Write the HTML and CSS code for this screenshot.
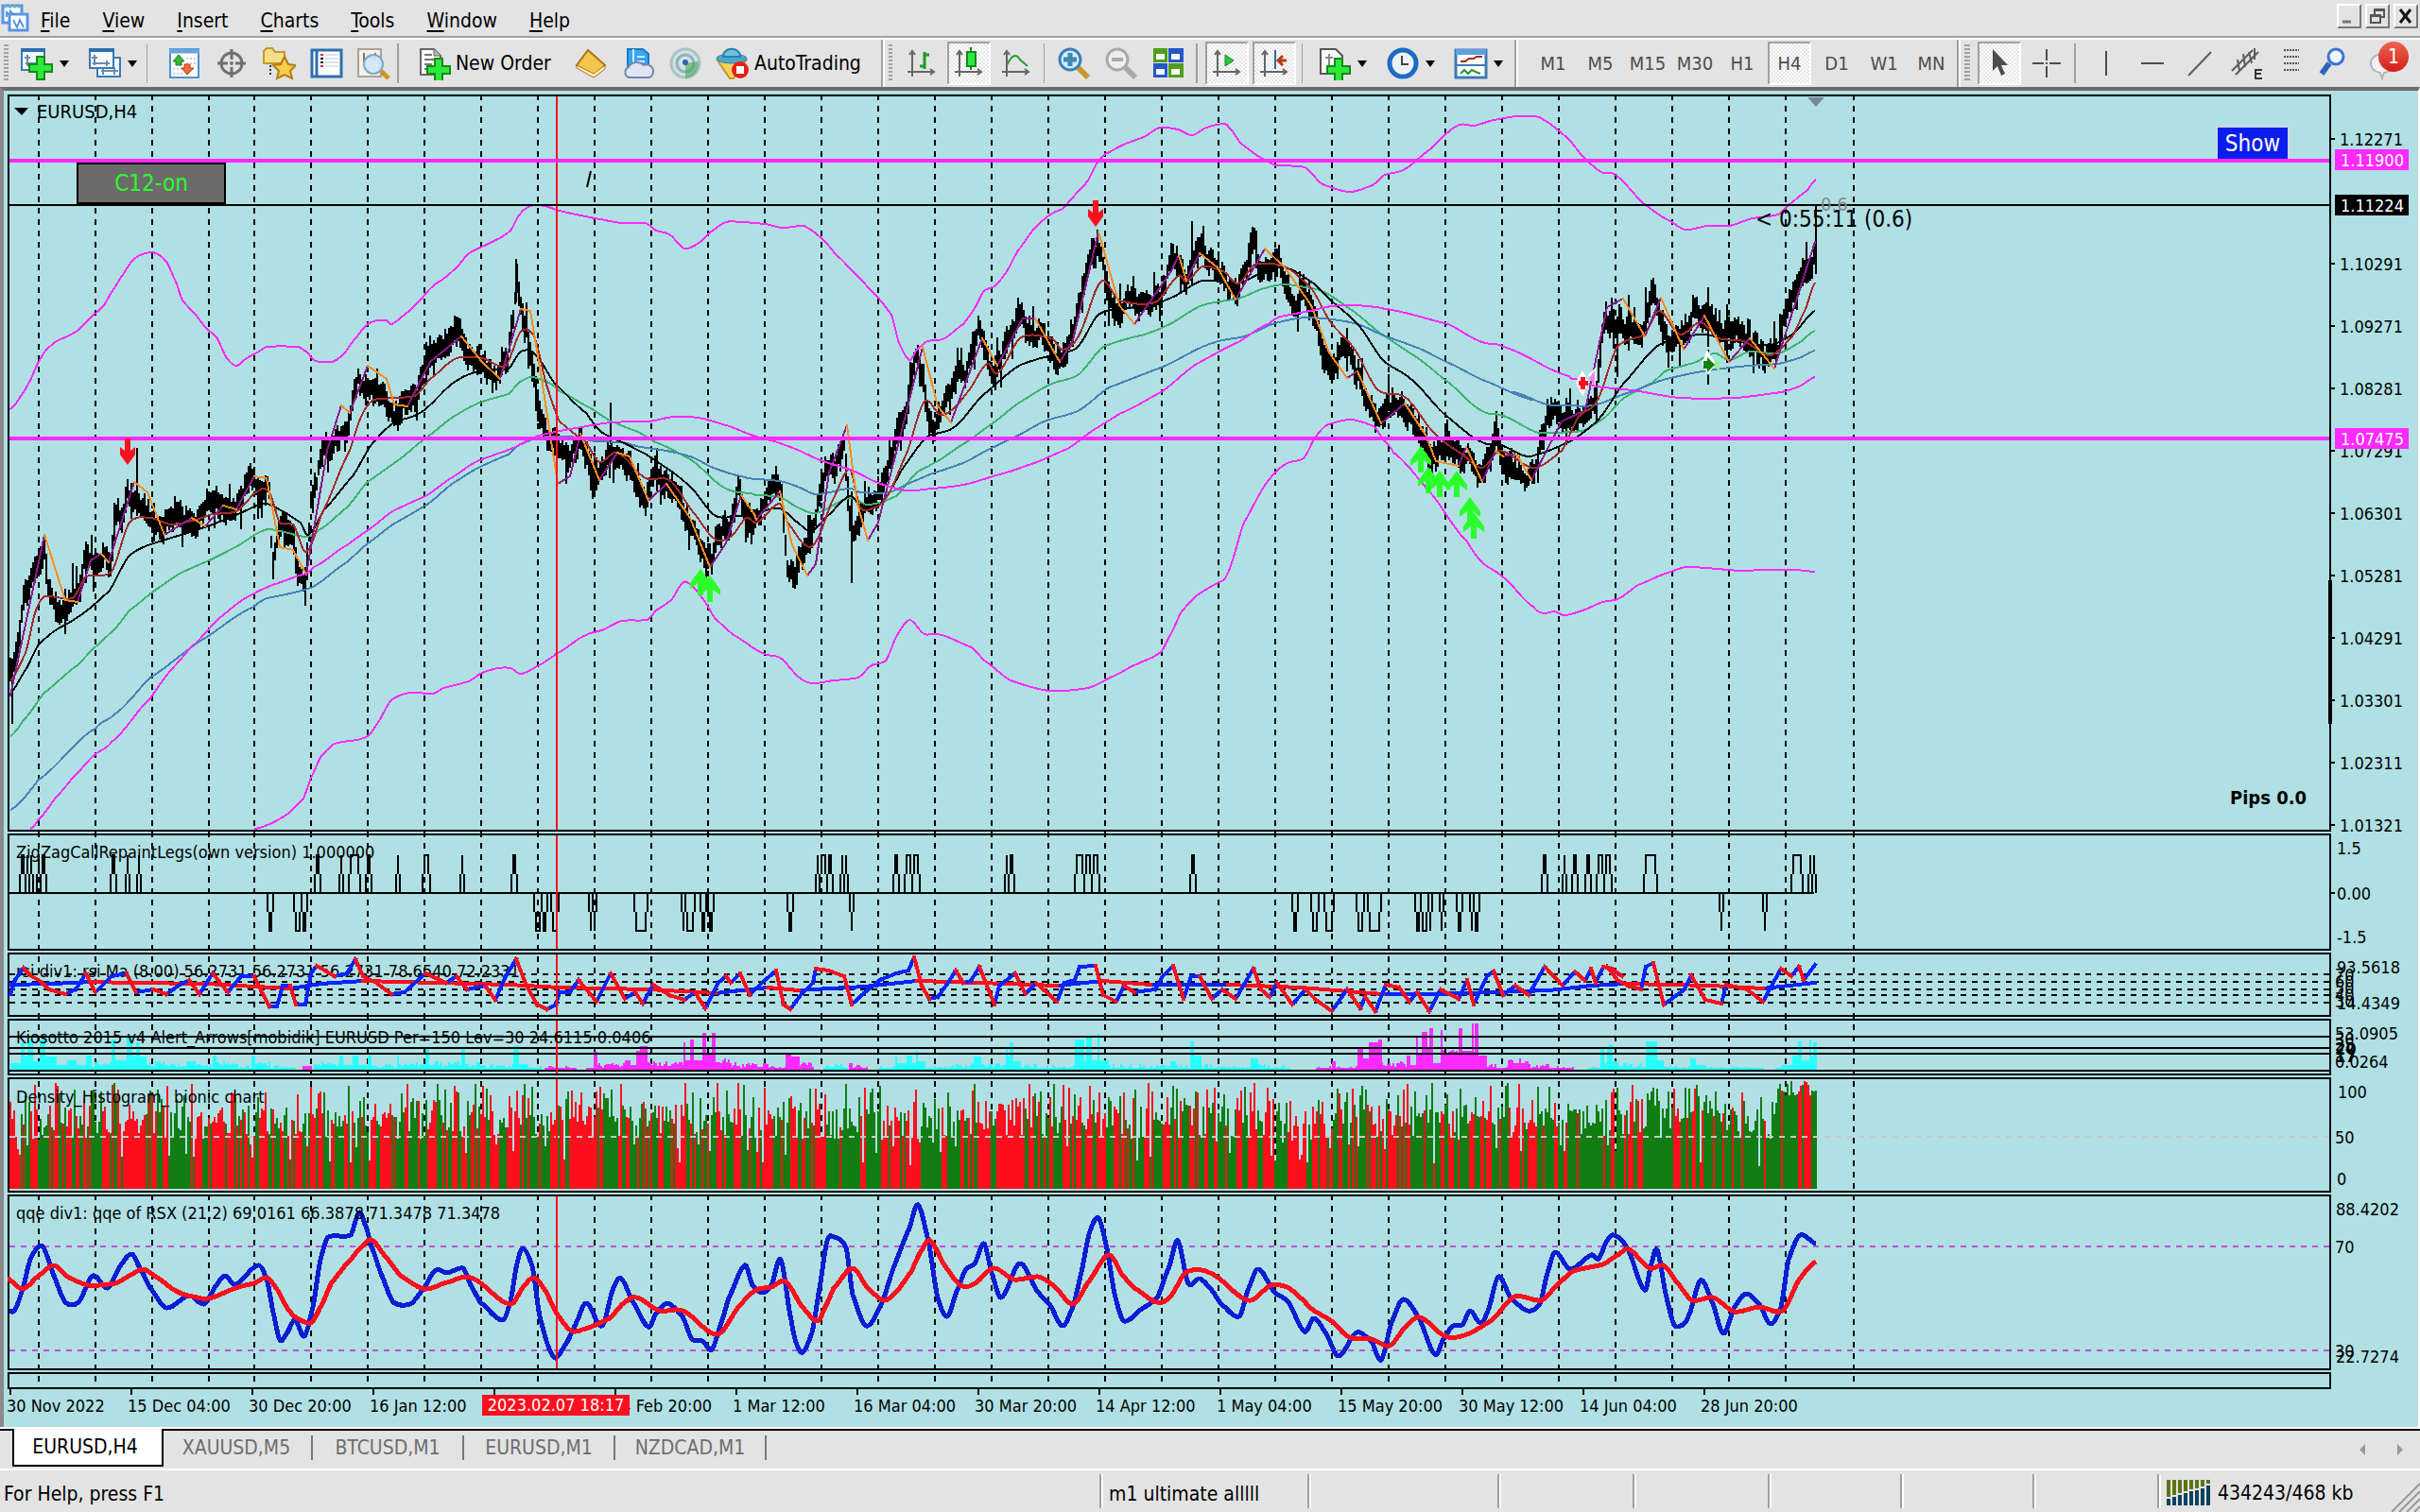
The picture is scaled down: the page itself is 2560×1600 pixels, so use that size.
FILE: index.html
```html
<!doctype html>
<html lang="en">

<head>
    <meta charset="utf-8">
    <title>EURUSD,H4</title>
    <link rel="stylesheet" href="styles.css">
</head>

<body>
    <nav class="menu">
        <svg class="logo" width="30" height="30" viewBox="0 0 30 30"><rect x="2" y="2" width="20" height="18" fill="#fff" stroke="#5b94e6" stroke-width="3"/><path d="M3 3h18" stroke="#5fc0b4" stroke-width="3" stroke-dasharray="3 2"/><path d="M6 14v-5l4 4v-5l5 6" stroke="#5b94e6" stroke-width="2" fill="none"/><rect x="9" y="11" width="19" height="17" fill="#fff" stroke="#5b94e6" stroke-width="3"/><path d="M13 17l4 8 3-8 4 8" stroke="#5b94e6" stroke-width="2" fill="none"/></svg>
        <button><u>F</u>ile</button>
        <button><u>V</u>iew</button>
        <button><u>I</u>nsert</button>
        <button><u>C</u>harts</button>
        <button><u>T</u>ools</button>
        <button><u>W</u>indow</button>
        <button><u>H</u>elp</button>
        <div class="win">
            <button aria-label="Minimize"><svg width="20" height="20"><path d="M3 16h9" stroke="#777" stroke-width="3"/></svg></button>
            <button aria-label="Restore"><svg width="20" height="20"><path d="M7 9V3h10v8h-4M7 4h10M3 9h10v8H3zM3 10h10" stroke="#555" stroke-width="2" fill="none"/></svg></button>
            <button aria-label="Close"><svg width="20" height="20"><path d="M4 3l11 14M15 3L4 17" stroke="#111" stroke-width="3"/></svg></button>
        </div>
    </nav>

    <header class="toolbar">
        <div class="group group-std">
            <span class="grip"></span>
            <button class="drop" aria-label="New chart"><svg class="ico" viewBox="0 0 36 36"><rect x="2" y="3" width="24" height="22" fill="#f4f9fd" stroke="#3c7ab5" stroke-width="2"/><path d="M1 4h26" stroke="#2f6fae" stroke-width="4"/><path d="M8 9v12M5 12h6M6 18h14" stroke="#6d8ba5" stroke-width="2"/><path d="M18 11h8v8h8v8h-8v8h-8v-8h-8v-8h8z" fill="#2ee83a" stroke="#138a1b" stroke-width="2"/></svg></button>
            <button class="drop" aria-label="Profiles"><svg class="ico" viewBox="0 0 36 36"><rect x="10" y="12" width="24" height="20" fill="#f4f9fd" stroke="#3c7ab5" stroke-width="2"/><path d="M14 26h18M16 22v8M28 22v8" stroke="#6d8ba5" stroke-width="2"/><rect x="2" y="3" width="25" height="20" fill="#f4f9fd" stroke="#3c7ab5" stroke-width="2"/><path d="M1 4h27" stroke="#2f6fae" stroke-width="4"/><path d="M7 9v11M4 12h6M5 18h18M20 15v6" stroke="#6d8ba5" stroke-width="2"/></svg></button>
            <span class="sep"></span>
            <button aria-label="Market Watch"><svg class="ico" viewBox="0 0 36 36"><rect x="3" y="3" width="30" height="30" fill="#fdfdfd" stroke="#4f92cf" stroke-width="2"/><path d="M2 5h32" stroke="#67a4dc" stroke-width="5"/><path d="M20 13h10M20 18h10M6 24h10M6 29h10" stroke="#ccd" stroke-width="2" stroke-dasharray="2 2"/><path d="M12 9l6 7h-3v4H9v-4H6z" fill="#35b535" stroke="#1d7c1d"/><path d="M21 30l7-7h-4v-4h-6v4h-3z" fill="#ef6c3f" stroke="#b53f1c"/></svg></button>
            <button aria-label="Data Window"><svg class="ico" viewBox="0 0 36 36"><circle cx="18" cy="18" r="11" fill="none" stroke="#707070" stroke-width="3"/><path d="M18 3v11M18 22v11M3 18h11M22 18h11" stroke="#707070" stroke-width="3"/><circle cx="18" cy="18" r="2" fill="#707070"/></svg></button>
            <button aria-label="Navigator"><svg class="ico" viewBox="0 0 36 36"><path d="M2 18V5l3-3h6l3 4h10v12z" fill="#f5df86" stroke="#c09a2b" stroke-width="2"/><path d="M9 20v12" stroke="#333" stroke-width="2" stroke-dasharray="2 2"/><path d="M24 11l4 8 8 1-6 6 2 8-8-4-8 4 2-8-6-6 8-1z" fill="#f6cf4a" stroke="#b07d17" stroke-width="2"/></svg></button>
            <button aria-label="Terminal"><svg class="ico" viewBox="0 0 36 36"><rect x="3" y="4" width="31" height="28" fill="#fff" stroke="#2f6fae" stroke-width="3"/><path d="M8 5v26" stroke="#2f6fae" stroke-width="3"/><path d="M12 9h3M12 21h3" stroke="#e22" stroke-width="2"/><path d="M12 13h3M12 17h3" stroke="#111" stroke-width="2"/><path d="M17 9h14M17 13h14M17 17h14M17 21h14" stroke="#b9c5e4" stroke-width="1"/></svg></button>
            <button aria-label="Strategy Tester"><svg class="ico" viewBox="0 0 36 36"><rect x="2" y="3" width="24" height="29" fill="#f3f1ea" stroke="#a9a48f" stroke-width="2"/><path d="M8 7v10M12 12h8M20 7v8" stroke="#777" stroke-width="2"/><path d="M26 26l8 8" stroke="#cf9626" stroke-width="5"/><circle cx="18" cy="19" r="10" fill="#cfe6f7" fill-opacity=".9" stroke="#7ea7c9" stroke-width="2"/></svg></button>
            <span class="sep"></span>
            <button class="wide order"><svg class="ico" viewBox="0 0 36 36"><path d="M3 3h14l7 7v20H3z" fill="#fafafa" stroke="#666" stroke-width="2"/><path d="M17 3v7h7" fill="#bbb" stroke="#666"/><path d="M7 9h8M7 14h12M7 19h8M7 24h6" stroke="#777" stroke-width="2"/><path d="M18 13h8v8h8v8h-8v8h-8v-8h-8v-8h8z" fill="#2ee83a" stroke="#138a1b" stroke-width="2"/></svg>New Order</button>
            <button aria-label="MetaEditor"><svg class="ico" viewBox="0 0 36 36"><path d="M15 4l18 16-12 12L3 20z" fill="#f3c64c" stroke="#a97219" stroke-width="2"/><path d="M3 20l18 9 12-9v4L21 33 3 23z" fill="#fff1c4" stroke="#a97219"/></svg></button>
            <button aria-label="MetaTrader Market"><svg class="ico" viewBox="0 0 36 36"><path d="M7 3h16l6 5v14H7z" fill="#3aa5f2" stroke="#1f78c4" stroke-width="2"/><path d="M13 3v18M17 11h8M17 16h8" stroke="#cdeaff" stroke-width="2"/><path d="M8 33a6 6 0 010-11 9 7 0 0116-2 6 6 0 016 13z" fill="#dfe5f2" stroke="#7486ad" stroke-width="2"/></svg></button>
            <button aria-label="Signals"><svg class="ico" viewBox="0 0 36 36"><circle cx="18" cy="18" r="15" fill="#d2e2dc" stroke="#a9c3c4" stroke-width="3"/><circle cx="18" cy="18" r="9" fill="none" stroke="#8fb0c4" stroke-width="3"/><path d="M18 18v16a16 16 0 0014-18z" fill="#46a758" fill-opacity=".6"/><circle cx="18" cy="17" r="3" fill="#2f64b4"/></svg></button>
            <button class="wide auto"><svg class="ico" viewBox="0 0 36 36"><path d="M3 15h30L20 34h-4z" fill="#f5d35d" stroke="#c39a2a" stroke-width="2"/><ellipse cx="18" cy="13" rx="16" ry="5" fill="#4fa6cc" stroke="#2e7fa5"/><path d="M9 11c0-11 18-11 18 0z" fill="#6ec0e2" stroke="#2e7fa5" stroke-width="2"/><circle cx="27" cy="25" r="9" fill="#e32219"/><rect x="23" y="21" width="8" height="8" fill="#fff"/></svg>AutoTrading</button>
        </div>

        <div class="group group-chart">
            <span class="grip"></span>
            <button aria-label="Bar Chart"><svg class="ico" viewBox="0 0 36 36"><path d="M8 5v27M3 27h28M5 9l3-4 3 4M27 24l4 3-4 3" stroke="#666" stroke-width="2" fill="none"/><path d="M21 6v18M21 9h5M16 21h5" stroke="#1c9c24" stroke-width="3"/></svg></button>
            <button class="on" aria-label="Candlesticks"><svg class="ico" viewBox="0 0 36 36"><path d="M8 5v27M3 27h28M5 9l3-4 3 4M27 24l4 3-4 3" stroke="#666" stroke-width="2" fill="none"/><path d="M20 1v24" stroke="#138a1b" stroke-width="2"/><rect x="16" y="6" width="9" height="15" fill="#2ee84a" stroke="#138a1b" stroke-width="2"/></svg></button>
            <button aria-label="Line Chart"><svg class="ico" viewBox="0 0 36 36"><path d="M8 5v27M3 27h28M5 9l3-4 3 4M27 24l4 3-4 3" stroke="#666" stroke-width="2" fill="none"/><path d="M8 20C14 8 18 8 22 14l8 7" stroke="#2b9a35" stroke-width="2" fill="none"/></svg></button>
            <span class="sep"></span>
            <button aria-label="Zoom In"><svg class="ico" viewBox="0 0 36 36"><path d="M22 22l11 11" stroke="#c8962a" stroke-width="6"/><circle cx="14" cy="14" r="11" fill="#d3ecf9" stroke="#3b7fb8" stroke-width="3"/><path d="M14 7v14M7 14h14" stroke="#3f86b4" stroke-width="5"/></svg></button>
            <button aria-label="Zoom Out"><svg class="ico" viewBox="0 0 36 36"><path d="M22 22l11 11" stroke="#a9a9a9" stroke-width="6"/><circle cx="14" cy="14" r="11" fill="#efefef" stroke="#a9a9a9" stroke-width="3"/><path d="M8 14h12" stroke="#a9a9a9" stroke-width="4"/></svg></button>
            <button aria-label="Tile Windows"><svg class="ico" viewBox="0 0 36 36"><path d="M2 2h15v15H2zM18 18h16v15H18z" fill="#4f9e1e"/><path d="M18 2h16v15H18zM2 18h15v15H2z" fill="#2456c8"/><path d="M5 8h9v6H5zM21 8h9v6h-9zM5 24h9v6H5zM21 24h9v6h-9z" fill="#f3f8ee"/></svg></button>
            <span class="sep"></span>
            <button class="on" aria-label="Auto Scroll"><svg class="ico" viewBox="0 0 36 36"><path d="M8 5v27M3 27h28M5 9l3-4 3 4M27 24l4 3-4 3" stroke="#666" stroke-width="2" fill="none"/><path d="M16 9l9 6-9 6z" fill="#2fc23a" stroke="#138a1b"/></svg></button>
            <button class="on" aria-label="Chart Shift"><svg class="ico" viewBox="0 0 36 36"><path d="M8 5v27M3 27h28M5 9l3-4 3 4M27 24l4 3-4 3" stroke="#666" stroke-width="2" fill="none"/><path d="M19 4v20" stroke="#2b6d9c" stroke-width="2"/><path d="M31 15H23M27 10l-5 5 5 5" stroke="#b53a13" stroke-width="3" fill="none"/></svg></button>
            <span class="sep"></span>
            <button class="drop" aria-label="Indicators"><svg class="ico" viewBox="0 0 36 36"><path d="M3 3h16l7 7v19H3z" fill="#fafafa" stroke="#555" stroke-width="2"/><path d="M12 8v14M8 12h8" stroke="#888" stroke-width="2"/><path d="M18 13h8v8h8v8h-8v8h-8v-8h-8v-8h8z" fill="#2ee83a" stroke="#138a1b" stroke-width="2"/></svg></button>
            <button class="drop" aria-label="Periods"><svg class="ico" viewBox="0 0 36 36"><circle cx="18" cy="18" r="14" fill="#eef2f4" stroke="#1d6cc4" stroke-width="5"/><path d="M17 10v9h7" stroke="#444" stroke-width="2" fill="none"/></svg></button>
            <button class="drop" aria-label="Templates"><svg class="ico" viewBox="0 0 36 36"><rect x="2" y="4" width="32" height="29" fill="#fff" stroke="#3c7ab5" stroke-width="3"/><path d="M2 6h32" stroke="#5f9fdc" stroke-width="6"/><path d="M2 20h32" stroke="#3c7ab5" stroke-width="2"/><path d="M7 16h5l4-3h5l3-2h6" stroke="#9a2d0c" stroke-width="2" fill="none"/><path d="M7 29l4-4 4 4 4-4 4 2 5 2" stroke="#229a2c" stroke-width="2" fill="none"/></svg></button>
        </div>

        <div class="group group-period">
            <span class="grip"></span>
            <button>M1</button>
            <button>M5</button>
            <button>M15</button>
            <button>M30</button>
            <button>H1</button>
            <button class="on">H4</button>
            <button>D1</button>
            <button>W1</button>
            <button>MN</button>
        </div>

        <div class="group group-draw">
            <span class="grip"></span>
            <button class="on" aria-label="Cursor"><svg class="ico" viewBox="0 0 36 36"><path d="M11 3v23l5-5 4 10 4-2-4-9h7z" fill="#4d4d4d"/></svg></button>
            <button aria-label="Crosshair"><svg class="ico" viewBox="0 0 36 36"><path d="M18 3v12M18 21v12M3 18h12M21 18h12M17 18h2" stroke="#4d4d4d" stroke-width="2"/></svg></button>
            <span class="sep"></span>
            <button aria-label="Vertical Line"><svg class="ico" viewBox="0 0 36 36"><path d="M19 5v26" stroke="#4d4d4d" stroke-width="2"/></svg></button>
            <button aria-label="Horizontal Line"><svg class="ico" viewBox="0 0 36 36"><path d="M6 18h24" stroke="#4d4d4d" stroke-width="2"/></svg></button>
            <button aria-label="Trendline"><svg class="ico" viewBox="0 0 36 36"><path d="M6 31L30 6" stroke="#5d5d5d" stroke-width="2"/></svg></button>
            <button aria-label="Equidistant Channel"><svg class="ico" viewBox="0 0 36 36"><path d="M2 26L24 4M6 30L30 6M8 14l2 12M14 8l2 14M20 6l3 12M26 2v12" stroke="#5d5d5d" stroke-width="2"/><path d="M34 25h-7v9h7M27 29h6" stroke="#333" stroke-width="2" fill="none"/></svg></button>
            <button class="slim" aria-label="Fibonacci"><svg class="ico" viewBox="0 0 36 36"><path d="M10 4h16M10 11h16M10 18h16M10 25h16" stroke="#555" stroke-width="2" stroke-dasharray="2 1"/></svg></button>
            <button class="slim" aria-label="Search"><svg class="ico" viewBox="0 0 36 36"><path d="M14 18L6 29" stroke="#2f63c0" stroke-width="6"/><circle cx="21" cy="11" r="8" fill="#eef5ff" stroke="#3f73d6" stroke-width="3"/></svg></button>
            <button class="slim chat" aria-label="Messages"><svg class="ico" viewBox="0 0 36 36"><path d="M14 28a12 10 0 114 0l-2 6z" fill="#f1f1f4" stroke="#b3b3b8" stroke-width="2"/></svg><span class="badge">1</span></button>
        </div>
    </header>

    <main class="chart">
        <div class="panes" id="panes">
            <svg class="grid" id="grid" viewBox="10 100 2454 1370" preserveAspectRatio="none"></svg>
            <section class="pane"><svg id="price" viewBox="10 102 2454 776" preserveAspectRatio="none"></svg></section>
            <section class="pane"><svg id="zigzag" viewBox="10 884 2454 120" preserveAspectRatio="none"></svg></section>
            <section class="pane"><svg id="rsi" viewBox="10 1010 2454 64" preserveAspectRatio="none"></svg></section>
            <section class="pane"><svg id="kiosotto" viewBox="10 1080 2454 56" preserveAspectRatio="none"></svg></section>
            <section class="pane"><svg id="density" viewBox="10 1142 2454 118" preserveAspectRatio="none"></svg></section>
            <section class="pane"><svg id="qqe" viewBox="10 1266 2454 182" preserveAspectRatio="none"></svg></section>
            <section class="pane"></section>
            <button class="c12">C12-on</button>
            <button class="show">Show</button>
        </div>
        <div class="times">
            <span>30 Nov 2022</span><span>15 Dec 04:00</span><span>30 Dec 20:00</span><span>16 Jan 12:00</span><span></span><span>14 Feb 20:00</span><span>1 Mar 12:00</span><span>16 Mar 04:00</span><span>30 Mar 20:00</span><span>14 Apr 12:00</span><span>1 May 04:00</span><span>15 May 20:00</span><span>30 May 12:00</span><span>14 Jun 04:00</span><span>28 Jun 20:00</span>
            <b class="now">2023.02.07 18:17</b>
        </div>
    </main>

    <div class="tabs">
        <button class="active">EURUSD,H4</button>
        <button>XAUUSD,M5</button>
        <button>BTCUSD,M1</button>
        <button>EURUSD,M1</button>
        <button>NZDCAD,M1</button>
        <svg class="scroll" width="60" height="16"><path d="M10 2v12L4 8zM44 2v12l6-6z" fill="#999"/></svg>
    </div>

    <footer class="status">
        <span class="help">For Help, press F1</span>
        <span class="profile">m1 ultimate alllll</span>
        <span class="s200"></span>
        <span class="s144"></span>
        <span class="s144"></span>
        <span class="s140"></span>
        <span class="s140"></span>
        <span class="s132"></span>
        <span class="net"><svg width="48" height="28"><path d="M2 0v18M8 0v16M14 0v14M20 0v12M26 0v10M32 0v9M38 0v7M44 0v4" stroke="#5d7416" stroke-width="4"/><path d="M2 20v7M8 18v9M14 16v11M20 14v13M26 12v15M32 11v16M38 9v18M44 6v21" stroke="#0d4260" stroke-width="4"/></svg>434243/468 kb</span>
        <svg class="size" width="30" height="32"><path d="M0 32L30 2M8 32L30 10M16 32L30 18M24 32l6-6" stroke="#999" stroke-width="2"/></svg>
    </footer>

    <script src="script.js"></script>
</body>

</html>
```
FILE: styles.css
```css
* {
    box-sizing: border-box;
}

body {
    margin: 0;
    height: 100vh;
    display: flex;
    flex-direction: column;
    background: #e3e3e3;
    color: #000;
    font: 21px/26px "DejaVu Sans Condensed", "DejaVu Sans", sans-serif;
    overflow: hidden;
}

button {
    border: 0;
    padding: 0;
    background: none;
    color: inherit;
    font: inherit;
}

svg {
    display: block;
}

.menu {
    display: flex;
    align-items: center;
    height: 42px;
    border-bottom: 2px solid #fff;
    box-shadow: inset 0 -2px #a0a0a0;
    padding-bottom: 2px;
}

.menu > button {
    padding: 6px 17px 0 17px;
}

.menu u {
    text-underline-offset: 3px;
}

.logo {
    margin: 0 -5px 0 1px;
}

.win {
    display: flex;
    gap: 4px;
    margin-left: auto;
    padding: 0 2px 4px 0;
}

.win button {
    width: 26px;
    height: 26px;
    padding: 1px;
    border: 2px solid;
    border-color: #fff #777 #777 #fff;
}

/* toolbar */

.toolbar {
    display: flex;
    height: 50px;
}

.group {
    display: flex;
    align-items: center;
    border-right: 2px solid #a0a0a0;
    box-shadow: 2px 0 #fff;
    padding-left: 4px;
}

.group-std {
    width: 934px;
}

.group-chart {
    width: 670px;
    padding-left: 6px;
}

.group-period {
    width: 468px;
    padding-left: 8px;
    color: #4d4d4d;
    font-size: 20px;
}

.group-draw {
    flex: 1;
    padding-left: 6px;
    border: 0;
    box-shadow: none;
}

.grip {
    width: 6px;
    height: 40px;
    margin-right: 8px;
    background: repeating-linear-gradient(#a0a0a0 0 2px, transparent 2px 4px);
}

.group-std .grip {
    margin-right: 4px;
}

.group button {
    display: flex;
    align-items: center;
    justify-content: center;
    width: 46px;
    height: 46px;
    margin-right: 4px;
    flex: none;
}

.ico {
    width: 36px;
    height: 36px;
    flex: none;
}

.group .drop {
    width: 68px;
    gap: 6px;
    justify-content: flex-end;
    padding-right: 8px;
}

.drop::after {
    content: "";
    border: 5px solid transparent;
    border-top: 7px solid #000;
    border-bottom: 0;
}

.group .wide {
    justify-content: flex-start;
    gap: 4px;
}

.group .order {
    width: 160px;
    padding-left: 4px;
}

.group .auto {
    width: 176px;
    padding-left: 4px;
    gap: 6px;
}

.group .slim {
    width: 40px;
}

.sep {
    width: 2px;
    height: 42px;
    margin: 0 8px 0 2px;
    background: #a0a0a0;
}

.group-std .sep {
    margin: 0 16px 0 -2px;
}

.group .on {
    border: 2px solid;
    border-color: #a0a0a0 #fff #fff #a0a0a0;
    background: repeating-conic-gradient(#fff 0 25%, #e6e6e6 0 50%) 0 0 / 4px 4px;
}

.group .chat {
    position: relative;
    margin-left: 10px;
}

.badge {
    position: absolute;
    left: 14px;
    top: 0;
    width: 32px;
    height: 32px;
    border-radius: 50%;
    background: linear-gradient(#ee6450, #cf1f1a);
    color: #fff;
    line-height: 32px;
}

/* chart window */

.chart {
    flex: 1;
    display: flex;
    flex-direction: column;
    min-height: 0;
    padding: 4px 92px 0 4px;
    border: 4px solid #6a6a6a;
    border-width: 4px 2px 0 4px;
    border-color: #6a6a6a #fff #fff #8a8a8a;
    background: #b0e0e4;
    font-size: 18px;
    line-height: 22px;
}

.panes {
    position: relative;
    flex: 1;
    min-height: 0;
    display: grid;
    grid-template-rows: 780fr 124fr 68fr 60fr 122fr 186fr 18fr;
    gap: 2px;
}

.pane {
    position: relative;
    min-height: 0;
    border: 2px solid #000;
}

.pane svg {
    width: 100%;
    height: 100%;
    overflow: visible;
}

.grid {
    position: absolute;
    left: 2px;
    right: 2px;
    top: 0;
    width: calc(100% - 4px);
    height: 100%;
}

.c12,
.show {
    position: absolute;
    font-size: 24px;
}

.c12 {
    left: 73px;
    top: 72px;
    width: 158px;
    height: 44px;
    border: 2px solid #000;
    background: #6b6b6b;
    color: #2aff2a;
}

.show {
    right: 44px;
    top: 33px;
    width: 78px;
    height: 35px;
    border: 2px solid #d4d4e4;
    border-bottom: 0;
    background: #0a1eeb;
    color: #fff;
}

.times {
    position: relative;
    display: flex;
    height: 40px;
    padding-left: 2px;
}

.times span {
    width: 128px;
    padding-top: 7px;
    border-left: 2px solid #000;
    border-image: linear-gradient(#000 6px, transparent 6px) 0 0 0 2;
    text-indent: -5px;
    white-space: nowrap;
}

.now {
    position: absolute;
    left: 502px;
    top: 6px;
    width: 156px;
    background: #ff0f1e;
    color: #fff;
    font-weight: normal;
    text-align: center;
}

/* svg parts */

.line,
.bars {
    fill: none;
    shape-rendering: crispEdges;
}

text {
    font-size: 18px;
    white-space: pre;
}

.t20 {
    font-size: 20px;
}

.t24 {
    font-size: 24px;
}

.bold {
    font-weight: bold;
}

/* tabs and status bar */

.tabs {
    display: flex;
    height: 46px;
    padding-left: 13px;
    border-top: 2px solid #fff;
    border-bottom: 2px solid #fff;
    box-shadow: inset 0 2px #000;
    color: #6d6d6d;
}

.tabs button {
    width: 160px;
    height: 36px;
    margin-top: 2px;
    padding-right: 6px;
    background: linear-gradient(#777, #777) right 2px center / 2px 26px no-repeat;
}

.tabs .active {
    height: 40px;
    margin-top: 0;
    border: 2px solid #000;
    border-top: 0;
    background: #fff;
    color: #000;
}

.scroll {
    margin: 14px 8px 0 auto;
}

.status {
    display: flex;
    align-items: center;
    height: 44px;
    padding-left: 4px;
}

.status span {
    height: 36px;
    padding-top: 4px;
    line-height: 34px;
    padding-left: 8px;
    border-left: 2px solid #a0a0a0;
    box-shadow: inset 2px 0 #fff;
}

.status .help {
    flex: 1;
    padding-left: 0;
    border: 0;
    box-shadow: none;
}

.status .profile {
    width: 220px;
}

.s200 {
    width: 201px;
}

.s144 {
    width: 143px;
}

.s140 {
    width: 140px;
}

.s132 {
    width: 132px;
}

.net {
    display: flex;
    align-items: center;
    gap: 6px;
    width: 248px;
}

.status .size {
    align-self: flex-end;
}
```
FILE: script.js
```js
var NS = "http://www.w3.org/2000/svg";
var MAGENTA = "#ff2aff";
var LEFT = 10;
var RIGHT = 2464;

// x offset, y offset, x scale, y scale of each block of samples
var A = [0, 200, 0.5485, 0.4464];
var B = [800, 200, 0.5485, 0.3333];
var C = [1400, 200, 0.7398, 0.4464];
var D = [840, 0, 0.5485, 0.3333];
var E = [1700, 0, 0.5485, 0.3333];
var O = [0, 0, 1.6327, 1.6327];
var P = [0, 870, 0.5485, 0.3333];
var Q = [860, 870, 0.5485, 0.3333];
var R = [1700, 870, 0.5485, 0.3333];
var S = [0, 1250, 0.8163, 0.3333];
var T = [1280, 1250, 0.8163, 0.3333];

var seed = 7;

function rnd() {
    seed = (seed * 16807) % 2147483647;
    return seed / 2147483647;
}

function add(id, tag, attrs, text) {
    var el = document.createElementNS(NS, tag);
    for (var k in attrs) {
        el.setAttribute(k, attrs[k]);
    }
    if (text) {
        el.textContent = text;
    }
    document.getElementById(id).appendChild(el);
    return el;
}

// pts(A, "x,y x,y", B, "x,y ...") joins the blocks in page units
function pts() {
    var out = [];
    for (var i = 0; i < arguments.length; i += 2) {
        var f = arguments[i];
        arguments[i + 1].split(" ").forEach(function(p) {
            var xy = p.split(",");
            out.push([Math.round(f[0] + xy[0] * f[2]), Math.round(f[1] + xy[1] * f[3])]);
        });
    }
    return out;
}

// smooth line through all points
function line(id, p, color, width) {
    var d = "M" + p[0];
    for (var i = 0; i < p.length - 1; i++) {
        var a = p[i - 1] || p[i], b = p[i], c = p[i + 1], e = p[i + 2] || c;
        d += "C" + [b[0] + (c[0] - b[0]) / 3, b[1] + (c[1] - a[1]) / 7, c[0] - (c[0] - b[0]) / 3, c[1] - (e[1] - b[1]) / 7, c[0], c[1]].join(" ");
    }
    add(id, "path", { class: "line", d: d, stroke: color, "stroke-width": width, "stroke-linejoin": "round" });
}

function twoTone(id, points, up, down, width) {
    var d = { up: "", down: "" };
    for (var i = 1; i < points.length; i++) {
        d[points[i][1] <= points[i - 1][1] ? "up" : "down"] += "M" + points[i - 1] + "L" + points[i];
    }
    add(id, "path", { class: "line", d: d.up, stroke: up, "stroke-width": width, "stroke-linecap": "square" });
    add(id, "path", { class: "line", d: d.down, stroke: down, "stroke-width": width, "stroke-linecap": "square" });
}

function level(id, y, color, width, dash, x) {
    add(id, "path", { class: "line", d: "M" + (x || LEFT) + " " + y + "H" + RIGHT, stroke: color, "stroke-width": width, "stroke-dasharray": dash || "none" });
}

function label(id, x, y, text, cls, color) {
    add(id, "text", { x: x, y: y + 7, class: cls || "", fill: color || "#000" }, text);
}

function scale(id, x, y, text) {
    add(id, "path", { class: "line", d: "M2464 " + y + "h6", stroke: "#000", "stroke-width": 2 });
    label(id, x, y, text);
}

function tag(id, y, text, bg, color) {
    add(id, "rect", { x: 2470, y: y - 11, width: 78, height: 22, fill: bg });
    label(id, 2476, y, text, "", color);
}

function at(points, x) {
    for (var i = 1; i < points.length; i++) {
        if (points[i][0] >= x) {
            var a = points[i - 1], b = points[i];
            return a[1] + (b[1] - a[1]) * (x - a[0]) / ((b[0] - a[0]) || 1);
        }
    }
    return points[points.length - 1][1];
}

function redLine(id, y1, y2) {
    add(id, "path", { class: "line", d: "M589 " + y1 + "V" + y2, stroke: "#ff0f1e", "stroke-width": 2 });
}

// grid
var gx = [41, 101, 161, 221];
for (var x = 269; x <= 1889; x += 60) {
    gx.push(x);
}
gx.push(1961);
add("grid", "path", {
    class: "line", stroke: "#000", "stroke-width": 2, "stroke-dasharray": "6 6",
    d: gx.map(function(x) { return "M" + x + " 100V1470"; }).join("")
});

// candles
var price = pts(A, "18,1170 28,1130 35,1070 45,960 60,930 75,900 85,850 95,950 110,980 125,1010 140,960 155,940 165,870 180,930 200,890 215,890 220,750 235,760 245,710 262,720 275,740 300,790 330,780 380,800 410,740 440,760 470,710 488,665 505,710 520,720 525,900 535,850 545,790 565,800 575,920 590,930 600,760 612,690 620,605 640,610 670,570 690,440 710,470 740,480 755,520 780,510 800,470 820,440 830,400 860,390 885,350 900,390 930,400 960,440 980,400 990,300 997,200 1005,280 1020,350 1035,480 1055,600 1075,630 1100,620 1120,580 1150,700 1180,600 1210,660 1245,740 1260,680 1290,700 1330,800 1360,870 1375,890 1385,810 1410,790 1425,700 1440,790 1458,790",
    B, "0,1050 20,1010 40,920 50,980 60,1180 75,1200 100,1130 120,980 135,850 150,860 170,810 185,1100 200,1060 215,1010 240,930 255,860 275,740 290,710 308,490 320,580 330,690 345,770 365,690 385,610 405,590 430,480 455,600 480,500 505,385 520,480 545,450 570,500 580,570 600,480 620,380 640,230 658,170 675,310 695,420 715,350 740,380 780,340 806,200 825,320 850,200 880,250 905,280 925,340 940,250 958,150 970,250 990,270 1008,220 1040,370 1060,320 1085,440 1108,570 1130,510 1145,530 1170,620 1200,740 1220,650 1240,660 1265,740 1285,760 1300,850 1340,830 1375,840 1390,920 1405,890 1425,750 1440,850 1475,900 1495,900",
    C, "300,660 320,550 345,560 370,520 390,480 400,300 430,330 455,345 472,235 490,360 510,360 528,280 550,330 570,380 590,350 630,400 650,380 660,280 685,210 700,180 704,130");
var candles = "";
var drift = 0;
for (x = 11; x <= 1919; x += 2) {
    drift = drift * 0.8 + (rnd() - 0.5) * 12;
    var mid = at(price, x) + drift;
    var hi = 6 + rnd() * 11 + (rnd() > 0.94 ? 16 : 0);
    var lo = 6 + rnd() * 11 + (rnd() > 0.94 ? 14 : 0);
    candles += "M" + x + " " + Math.round(mid - hi) + "V" + Math.round(mid + lo);
}
candles += "M13 700V766M145 474V520M323 600V641M546 274V320M646 426V470M901 520V617M1261 234V290M1921 216V290M1711 350V399M1807 370V407";
add("price", "path", { class: "bars", d: candles, stroke: "#000", "stroke-width": 2 });

// moving averages
line("price", pts(A, "20,1298 45,1260 85,1195 150,1128 190,1080 220,1045 250,1000 300,950 350,910 400,882 450,852 510,808 540,812 590,825 615,808 670,755 710,695 760,650 820,592 880,535 930,503 980,487 1000,460 1025,446 1060,460 1080,480 1140,520 1180,550 1230,575 1260,597 1330,640 1400,710 1450,722",
    B, "0,973 45,978 80,1010 115,1030 180,982 215,1002 270,975 310,900 340,872 400,810 450,750 510,675 570,618 620,590 670,500 750,462 790,435 860,368 930,348 980,315 1020,302 1060,312 1090,325 1140,375 1210,465 1270,530 1330,610 1400,705 1440,720 1510,775",
    C, "310,578 370,573 400,545 430,495 470,460 490,430 530,412 560,390 580,405 610,385 650,390 680,365 703,337"), "#3cb371", 2);
line("price", pts(A, "20,1472 75,1400 185,1280 220,1245 290,1158 400,1062 490,990 515,970 600,945 670,885 710,840 760,793 820,750 880,692 930,657 980,630 1000,608 1040,590 1100,588 1150,597 1200,600 1235,612 1285,620 1330,635 1380,662 1430,682 1455,688",
    B, "0,922 45,928 80,945 115,968 180,950 200,962 255,962 300,930 340,903 400,870 450,825 500,785 560,735 620,705 680,630 780,568 880,490 940,467 1000,427 1060,407 1110,415 1160,430 1215,468 1270,500 1330,548 1400,607 1500,670",
    C, "270,482 320,510 350,513 385,512 430,485 490,450 550,430 610,418 650,415 680,402 703,382"), "#4682b4", 2);
line("price", pts(A, "20,1195 50,1140 75,1080 110,1045 150,1015 210,955 250,870 290,842 350,820 400,800 460,770 510,745 545,765 580,790 595,820 625,760 680,680 720,600 760,553 810,530 880,455 930,430 980,425 1005,385 1030,390 1070,462 1130,530 1160,575 1190,595 1240,625 1290,665 1330,705 1380,775 1430,775 1455,785",
    B, "0,1030 45,1015 80,1060 105,1085 135,1040 180,975 200,1005 220,1012 245,990 290,870 330,785 380,760 440,650 510,558 590,522 620,500 660,400 700,380 760,370 800,345 860,292 930,300 970,270 1020,250 1070,295 1120,370 1160,430 1210,545 1260,600 1330,720 1400,805 1440,815 1480,845",
    C, "300,632 350,600 390,550 430,460 480,370 540,345 590,360 640,370 670,345 703,290"), "#000", 2);
line("price", pts(A, "20,1165 50,1100 70,1000 85,965 140,970 165,918 215,908 250,790 290,780 330,795 380,785 410,770 455,765 500,715 520,720 540,790 565,795 590,860 620,770 675,620 700,530 720,500 800,490 830,450 880,400 930,400 975,420 1005,338 1030,350 1055,470 1080,550 1130,600 1155,648 1190,625 1245,685 1290,690 1340,770 1380,830 1410,825 1440,780",
    B, "0,1060 45,1000 60,1060 95,1130 115,1120 150,980 180,890 200,1010 225,1015 250,980 290,840 325,675 355,718 380,700 410,640 445,555 465,585 510,470 570,475 590,510 620,470 665,295 700,355 770,360 815,275 830,295 860,245 900,260 930,300 960,240 1020,245 1070,315 1110,430 1150,500 1200,640 1250,660 1310,780 1360,840 1400,885 1435,830",
    C, "300,660 340,620 365,540 390,505 420,375 460,345 480,290 510,345 540,315 565,355 600,360 640,395 670,350 690,285 703,222"), "#a52a2a", 2);
twoTone("price", pts(A, "20,1200 85,820 125,975 150,980 175,880 195,865 210,885 258,695 285,720 318,820 370,780 395,800 430,750 455,760 490,680 515,685 540,850 565,855 590,915 630,620 658,512 675,530 710,420 745,450 760,510 785,515 830,410 890,350 930,410 965,450 1005,285 1022,290 1045,450 1075,700 1100,680 1120,580 1155,690 1190,625 1215,635 1250,740 1285,700 1330,780 1370,895 1400,840 1430,725 1455,770",
    B, "0,1050 45,960 70,1130 98,1228 115,1190 140,900 175,750 195,1000 215,1115 235,1060 275,800 320,500 350,690 375,742 435,475 465,560 515,410 537,410 585,550 610,480 660,135 700,370 730,430 800,260 815,210 830,290 855,205 890,250 925,350 980,190 1020,250 1070,370 1105,520 1140,600 1160,580 1205,745 1250,680 1290,780 1310,865 1355,880 1370,820 1400,930 1425,830 1440,850 1465,840",
    C, "298,690 340,550 375,525 405,280 428,260 460,350 483,258 515,380 545,300 580,410 610,355 645,425 703,125"), "#8b1a8b", "#ff8c1a", 2);

// channel
line("price", pts(A, "18,521 28,514 40,490 55,462 75,410 90,380 110,360 130,349 150,335 165,315 180,298 200,275 215,245 235,205 255,170 270,157 290,151 305,155 320,172 340,220 352,265 375,295 400,332 418,352 438,400 455,418 475,402 495,388 515,374 575,374 590,385 605,405 618,410 640,410 660,395 685,355 710,320 730,311 745,312 755,320 780,297 800,275 835,230 855,213 880,185 905,153 930,137 965,117 985,98 1000,62 1015,45 1030,39 1050,41 1080,52 1110,61 1147,69 1200,80 1245,80 1265,98 1290,108 1320,141 1345,130 1370,103 1400,79 1430,78 1475,83 1510,92 1545,87",
    B, "95,120 125,155 155,210 195,275 235,345 260,400 275,490 295,543 310,510 330,482 360,476 400,430 420,385 440,325 460,310 480,270 505,195 540,120 570,78 590,62 605,35 625,0",
    D, "565,575 585,515 600,490 640,455 675,435 705,405 740,411 767,428 795,406 830,392 838,405 862,455 900,500 930,525 985,531 1020,585 1072,608 1115,588 1140,555 1175,540 1215,490 1280,400 1310,398 1350,380 1395,369 1430,369 1445,380 1490,435 1530,510 1560,548",
    E, "15,555 75,650 125,705 152,730 195,716 235,716 280,692 330,680 360,640 385,605 403,570"), MAGENTA, 2);
line("price", pts(A, "490,1517 510,1510 550,1485 585,1445 600,1395 620,1345 645,1315 690,1305 710,1298 725,1270 755,1213 790,1194 835,1197 855,1182 905,1168 930,1148 960,1136 985,1136 1005,1149 1040,1130 1075,1100 1130,1057 1160,1047 1200,1024 1248,1022 1265,1000 1295,975 1318,933 1335,940 1355,970 1380,1020 1415,1058 1475,1102 1505,1112 1545,1160 1568,1172",
    O, "540,441 556,439 565,431 574,428", B, "272,1415 295,1368 325,1412 350,1412 415,1455 440,1497",
    O, "655,441 680,448 705,446 722,438 738,430",
    B, "750,1497 780,1470 800,1410 820,1340 850,1290 890,1250 908,1225 940,1060 990,920 1025,870 1055,855 1080,785 1100,750 1145,732 1190,752 1215,805",
    C, "100,625 150,715 205,835 230,890 255,918 300,990 315,1005 330,1002 345,1010 370,998 400,980 420,972 450,938 498,907 520,896 545,899 600,906 625,902 675,903 703,907"), MAGENTA, 2);
line("price", pts(A, "58,1517 75,1495 110,1440 150,1385 185,1340 215,1310 290,1208 330,1140 370,1085 430,1010 480,965 525,938 590,912 605,897 670,845 710,808 760,762 820,728 870,685 920,645 980,618 1040,585 1100,570 1180,553 1250,551 1300,540 1345,541 1400,560 1460,587",
    B, "20,795 60,815 130,865 180,890 240,935 290,957 340,950 400,938 470,907 520,880 600,825 660,755 700,715 780,645 850,555 930,487 990,425 1010,405 1060,390 1110,372 1150,370 1215,381 1335,428 1400,485 1440,502 1568,595",
    C, "360,450 390,468 440,478 510,494 590,494 655,481 680,468 703,445"), MAGENTA, 2);

// levels and marks
redLine("price", 102, 878);
level("price", 217, "#000", 2);
level("price", 170, MAGENTA, 4);
level("price", 464, MAGENTA, 4);
add("price", "path", { d: "M1912 103h18l-9 10z", fill: "#78879b" });
add("price", "path", { d: "M15 114h15l-7 8z" });
add("price", "path", { d: "M2465 614V766", stroke: "#000", "stroke-width": 4 });
add("price", "path", { d: "M625 181l-4 17", stroke: "#000", "stroke-width": 2 });
[[135, 464], [1159, 212]].forEach(function(p) {
    add("price", "path", { d: "M" + (p[0] - 3) + " " + p[1] + "h6v13l5-4v8l-8 11l-8 -11v-8l5 4z", fill: "#ff0f1e" });
});
[[741, 602], [751, 609], [1503, 472], [1511, 494], [1523, 498], [1541, 498], [1555, 526], [1559, 542]].forEach(function(p) {
    add("price", "path", { d: "M" + p[0] + " " + p[1] + "l11 15v6l-8 -6v13h-6v-13l-8 6v-6z", fill: "#2aff2a" });
});
add("price", "path", { d: "M1680 397l8-8v20zM1674 392l7 13l-7 14l-7-14z", fill: "#fff" });
add("price", "path", { d: "M1681 400l6-8v16z", fill: "#ee82ee" });
add("price", "path", { d: "M1672 399h5v4h3v5h-3v4h-5v-4h-2v-5h2z", fill: "#ff0f1e" });
add("price", "path", { d: "M1806 370l9 15l-8 12l-7-12z", fill: "#fff" });
add("price", "path", { d: "M1812 386l7-8v16z", fill: "#98ee98" });
add("price", "path", { d: "M1802 382h4v-4l8 8l-8 8v-4h-4z", fill: "#118011" });

label("price", 39, 118, "EURUSD,H4", "t20");
label("price", 1857, 233, "< 0:55:11 (0.6)", "t24");
label("price", 1926, 216, "0.6", "t20", "#888");
label("price", 2359, 844, "Pips 0.0", "t20 bold");

var prices = ["1.12271", "", "1.10291", "1.09271", "1.08281", "1.07291", "1.06301", "1.05281", "1.04291", "1.03301", "1.02311", "1.01321"];
for (var i = 0; i < prices.length; i++) {
    if (prices[i]) {
        scale("price", 2475, 147 + i * 66, prices[i]);
    }
}
tag("price", 169, "1.11900", MAGENTA, "#fff");
tag("price", 217, "1.11224", "#000", "#fff");
tag("price", 464, "1.07475", MAGENTA, "#fff");

// zigzag legs
function legs(f, list, y) {
    return list.split(" ").map(function(s) {
        var ab = s.split(",");
        var a = Math.round(f[0] + ab[0] * f[2]) | 1;
        var b = Math.max(Math.round(f[0] + ab[1] * f[2]) | 1, a + 4);
        var m = (945 + y) / 2;
        return "M" + a + " 945V" + m + "M" + (a + 2) + " " + m + "V" + y + "H" + (b - 2) + "V" + m + "M" + b + " " + m + "V945";
    }).join("");
}
add("zigzag", "path", {
    class: "line", stroke: "#000", "stroke-width": 2,
    d: "M10 945H1919" +
        legs(P, "38,48 48,56 56,64 70,78 78,90 213,223 242,250 262,268 606,617 654,662 672,692 705,715 764,770 815,829 887,895 986,997", 905) +
        legs(Q, "4,12 12,26 26,38 52,59 59,68 154,166 177,192 192,204 369,377 377,386 504,522 522,538 538,553 727,736 1406,1414 1445,1453 1464,1475 1489,1500 1511,1526 1526,1541", 905) +
        legs(R, "-6,9 70,96 356,377 388,396 396,402", 905) +
        legs(P, "516,527 567,579 579,593 1030,1042 1042,1055 1062,1077 1136,1142 1142,1150 1224,1249 1314,1322 1322,1338 1350,1360 1364,1376 1518,1527", 985) +
        legs(Q, "70,79 924,933 961,974 986,1004 1048,1062 1070,1096 1162,1172 1172,1186 1186,1194 1208,1216 1241,1253 1266,1274 1274,1283", 985) +
        legs(R, "216,225 300,309", 985)
});
redLine("zigzag", 884, 1004);
label("zigzag", 17, 901, "ZigZagCallRepaintLegs(own version) 1.000000");
label("zigzag", 2472, 897, "1.5");
scale("zigzag", 2472, 945, "0.00");
label("zigzag", 2472, 991, "-1.5");

// rsi
label("rsi", 17, 1027, "rsi div1: rsi Ma (8.00) 56.2731 56.2731 56.2731 78.6540 72.2331");
[1031, 1039, 1047, 1053, 1061].forEach(function(y) {
    level("rsi", y, "#000", 2, "6 6");
});
twoTone("rsi", pts(P, "20,515 100,512 180,508 250,510 400,512 460,518 560,528 620,512 700,505 980,515 1080,525 1250,530 1380,543 1480,525 1540,535",
    Q, "0,530 100,522 200,505 320,510 470,518 560,505 650,515 800,515 940,525 1100,545 1200,545 1310,540 1420,535 1500,520 1568,512", R, "200,520 300,528 402,510"), "#0a24ff", "#ff0f1e", 4);
twoTone("rsi", pts(P, "20,545 30,500 45,462 60,490 75,500 95,530 125,545 145,530 165,480 185,540 215,490 245,480 262,540 295,530 320,545 345,520 365,500 385,545 410,480 440,540 465,490 490,490 505,540 520,585 535,585 545,520 560,520 570,580 588,580 600,480 610,455 645,490 670,480 685,435 700,490 725,510 755,545 780,540 820,480 860,510 880,490 900,530 935,520 955,565 975,490 995,435 1015,520 1035,580 1055,595 1072,580 1080,540 1100,540 1115,500 1150,570 1177,480 1205,560 1225,540 1240,575 1260,515 1290,550 1320,565 1340,540 1360,590 1385,510 1400,490 1410,510 1427,480 1445,550 1470,510 1497,470 1512,580 1525,595 1545,550 1568,510",
    Q, "5,465 30,470 60,490 75,580 100,540 130,500 160,480 185,470 195,430 210,520 225,560 240,555 260,510 275,470 290,510 305,505 320,460 335,520 350,580 360,520 390,480 410,545 430,510 450,540 470,570 485,510 505,500 515,460 545,455 560,550 585,570 600,520 620,540 660,530 675,490 695,455 715,560 730,490 745,490 770,560 790,530 815,560 850,465 865,530 880,555 895,510 925,580 950,530 970,565 1000,600 1030,530 1055,590 1065,555 1085,600 1105,515 1130,525 1150,570 1165,540 1188,600 1210,530 1245,560 1262,500 1275,580 1300,490 1313,475 1330,550 1355,520 1380,550 1412,460 1445,520 1470,475 1490,505 1500,465 1510,510 1525,460 1540,465 1560,490",
    R, "0,460 20,500 40,520 65,530 75,460 90,448 110,580 150,530 162,485 190,565 220,575 230,515 270,530 300,570 335,465 355,490 370,460 380,500 402,452"), "#0a24ff", "#ff0f1e", 4);
redLine("rsi", 1010, 1074);
label("rsi", 2472, 1023, "93.5618");
["70", "60", "50", "40", "30"].forEach(function(t, i) {
    label("rsi", 2470, 1031 + i * 7, t);
});
label("rsi", 2472, 1061, "14.4349");

// kiosotto histogram, steps of "x,top"
function steps(f, list, color) {
    var p = pts(f, list), d = "";
    for (var i = 0; i < p.length - 1; i++) {
        for (var x = p[i][0]; x < p[i + 1][0]; x += 2) {
            var wide = p[i + 1][0] - p[i][0] > 12;
            d += "M" + (x + 1) + " 1132V" + Math.min(1130, p[i][1] + (wide ? Math.round(rnd() * 6 - 2) : 0));
        }
    }
    add("kiosotto", "path", { class: "bars", d: d, stroke: color, "stroke-width": 2 });
}
var CYAN = "#2affff";
steps(P, "20,765 40,700 46,745 52,690 62,760 76,690 88,745 110,770 130,755 145,770 165,740 175,765 215,690 222,755 245,680 255,740 262,700 268,745 280,765 320,770 360,760 375,770 410,740 416,765 455,770 485,740 492,765 520,778 570,778", CYAN);
steps(P, "583,775 602,775", MAGENTA);
steps(P, "605,765 655,740 660,770 680,740 690,770 710,740 716,770 765,740 770,765 820,715 828,765 890,715 897,765 930,770 990,710 1000,768 1020,778 1045,778", CYAN);
steps(P, "1050,780 1110,780", MAGENTA);
steps(P, "1130,780 1145,730 1151,770 1205,755 1214,770 1227,725 1235,710 1248,765 1280,765 1318,700 1322,755 1330,690 1338,755 1355,670 1362,735 1372,670 1378,755 1410,768 1445,768 1480,775 1515,735 1525,745 1540,765 1568,765", MAGENTA);
steps(Q, "20,775 68,775", CYAN);
steps(Q, "70,765 76,778 105,778", MAGENTA);
steps(Q, "125,780 158,745 163,765 180,740 190,765 198,725 203,760 215,778 265,770 310,745 325,768 372,710 376,745 380,700 386,760 400,770 435,778 505,690 522,760 526,685 536,755 548,672 553,755 570,770 600,775 690,760 700,775 728,695 734,740 748,770 800,778 845,750 858,775 920,778", CYAN);
steps(Q, "970,780 1000,760 1006,775 1050,715 1060,750 1072,700 1088,745 1090,690 1096,765 1145,740 1152,770 1163,685 1167,735 1174,665 1184,715 1188,655 1194,765 1210,660 1214,725 1245,655 1252,725 1270,640 1274,730 1276,640 1281,740 1300,770 1340,755 1380,770 1420,778 1465,778", MAGENTA);
steps(Q, "1495,780 1518,720 1524,765 1535,705 1541,765 1568,765", CYAN);
steps(R, "0,710 8,760 20,770 75,695 94,755 110,775 160,750 170,770 190,780 300,780", CYAN);
steps(R, "325,780 335,770 358,740 368,695 376,755 390,690 394,745 397,700 405,700", CYAN);
[1097, 1109, 1115, 1133].forEach(function(y) {
    level("kiosotto", y, "#000", 2);
});
redLine("kiosotto", 1080, 1136);
label("kiosotto", 17, 1097, "Kiosotto 2015 v4 Alert_Arrows[mobidik] EURUSD Per=150 Lev=30 24.6115 0.0406");
["53.0905", "30", "25"].forEach(function(t, i) {
    label("kiosotto", 2470, 1093 + i * 6, t);
});
["20", "17"].forEach(function(t, i) {
    label("kiosotto", 2470, 1109 + i * 8, t, "bold");
});
label("kiosotto", 2470, 1123, "0.0264");

// density histogram
var bars = { "#ff0f1e": "", "#127d12": "" };
var col = "#127d12";
for (x = 11; x <= 1921; x += 2) {
    if (rnd() > 0.62) {
        col = col == "#ff0f1e" ? "#127d12" : "#ff0f1e";
    }
    var r = rnd();
    var peak = r > 0.9 ? 1200 + rnd() * 35 : r > 0.4 ? 1146 + rnd() * 45 : 1170 + rnd() * 35;
    if (x > 1880) {
        peak = 1144 + rnd() * 16;
    }
    bars[col] += "M" + x + " 1258V" + Math.round(peak);
}
for (var c in bars) {
    add("density", "path", { class: "bars", d: bars[c], stroke: c, "stroke-width": 2 });
}
level("density", 1203, "#c8c8c8", 2, "6 6");
redLine("density", 1142, 1258);
label("density", 17, 1160, "Density_Histogram_ bionic chart");
label("density", 2473, 1155, "100");
label("density", 2470, 1203, "50");
label("density", 2472, 1247, "0");

// qqe
level("qqe", 1319, "#ba55d3", 2, "6 6");
level("qqe", 1429, "#ba55d3", 2, "6 6");
line("qqe", pts(S, "12,412 18,410 28,350 40,240 55,207 70,300 85,384 102,384 120,300 140,338 155,270 170,232 180,270 195,340 215,403 245,362 265,390 280,330 292,300 305,328 335,268 345,310 355,430 362,505 370,490 382,440 395,492 405,400 415,250 425,178 455,172 466,98 475,150 480,200 495,300 510,384 532,390 548,345 565,282 580,292 600,275 610,330 622,385 652,440 662,380 670,260 677,212 690,270 700,430 712,530 720,560 735,510 745,460 760,388 780,458 795,340 805,310 820,380 840,463 850,420 865,388 885,430 897,500 910,508 923,535 935,450 945,370 965,268 975,330 987,355 1000,330 1012,250 1025,440 1033,520 1040,542 1052,480 1062,340 1072,190 1080,177 1097,210 1105,360 1122,458 1140,400 1160,260 1178,150 1190,75 1203,190 1215,370 1228,428 1240,350 1252,280 1263,260 1275,197 1285,290 1297,368 1322,262 1345,350 1360,390 1377,460 1390,400 1400,300 1412,160 1423,117 1433,200 1445,370 1457,445 1480,405 1500,370 1515,270 1526,190 1540,325 1555,310",
    T, "0,340 15,390 38,428 50,340 62,280 85,355 100,380 122,478 135,435 150,480 167,555 190,480 210,510 222,568 235,450 250,375 270,430 292,548 303,500 315,460 327,455 337,410 350,450 360,410 374,303 390,370 412,410 428,390 437,290 447,225 467,280 495,235 503,245 515,190 523,170 540,210 563,345 572,260 580,220 592,370 602,455 612,455 620,430 636,315 650,380 665,483 680,400 695,357 712,390 727,453 740,400 750,250 765,172 785,198"), "#0a1ed2", 5);
line("qqe", pts(S, "10,310 30,343 50,300 70,267 90,305 115,330 150,325 170,297 185,280 200,300 230,350 250,365 270,372 310,335 330,325 345,305 358,340 375,410 385,435 403,450 415,400 430,320 455,250 470,205 482,185 500,240 520,300 550,343 580,320 610,305 662,390 680,330 692,305 705,340 722,420 740,475 755,470 790,435 810,385 825,370 855,412 885,412 930,485 960,390 980,345 1000,335 1018,318 1040,400 1060,443 1070,400 1080,340 1105,275 1125,340 1145,378 1160,355 1180,290 1195,220 1205,190 1225,270 1245,330 1262,328 1287,275 1315,312 1345,303 1365,330 1390,390 1410,320 1437,233 1455,300 1470,340 1500,384 1515,370 1537,288",
    T, "0,290 50,378 80,330 100,335 115,365 135,410 155,440 180,495 210,500 233,523 255,460 272,432 305,492 330,490 365,440 395,365 430,378 450,330 470,285 510,265 530,230 543,215 570,275 588,268 605,320 625,378 652,368 680,413 712,398 742,410 765,310 785,255"), "#ff0f1e", 5);
redLine("qqe", 1266, 1448);
label("qqe", 17, 1283, "qqe div1: qqe of RSX (21,2) 69.0161 66.3878 71.3478 71.3478");
label("qqe", 2471, 1279, "88.4202");
label("qqe", 2470, 1319, "70");
label("qqe", 2470, 1429, "30");
label("qqe", 2471, 1435, "22.7274");
```
